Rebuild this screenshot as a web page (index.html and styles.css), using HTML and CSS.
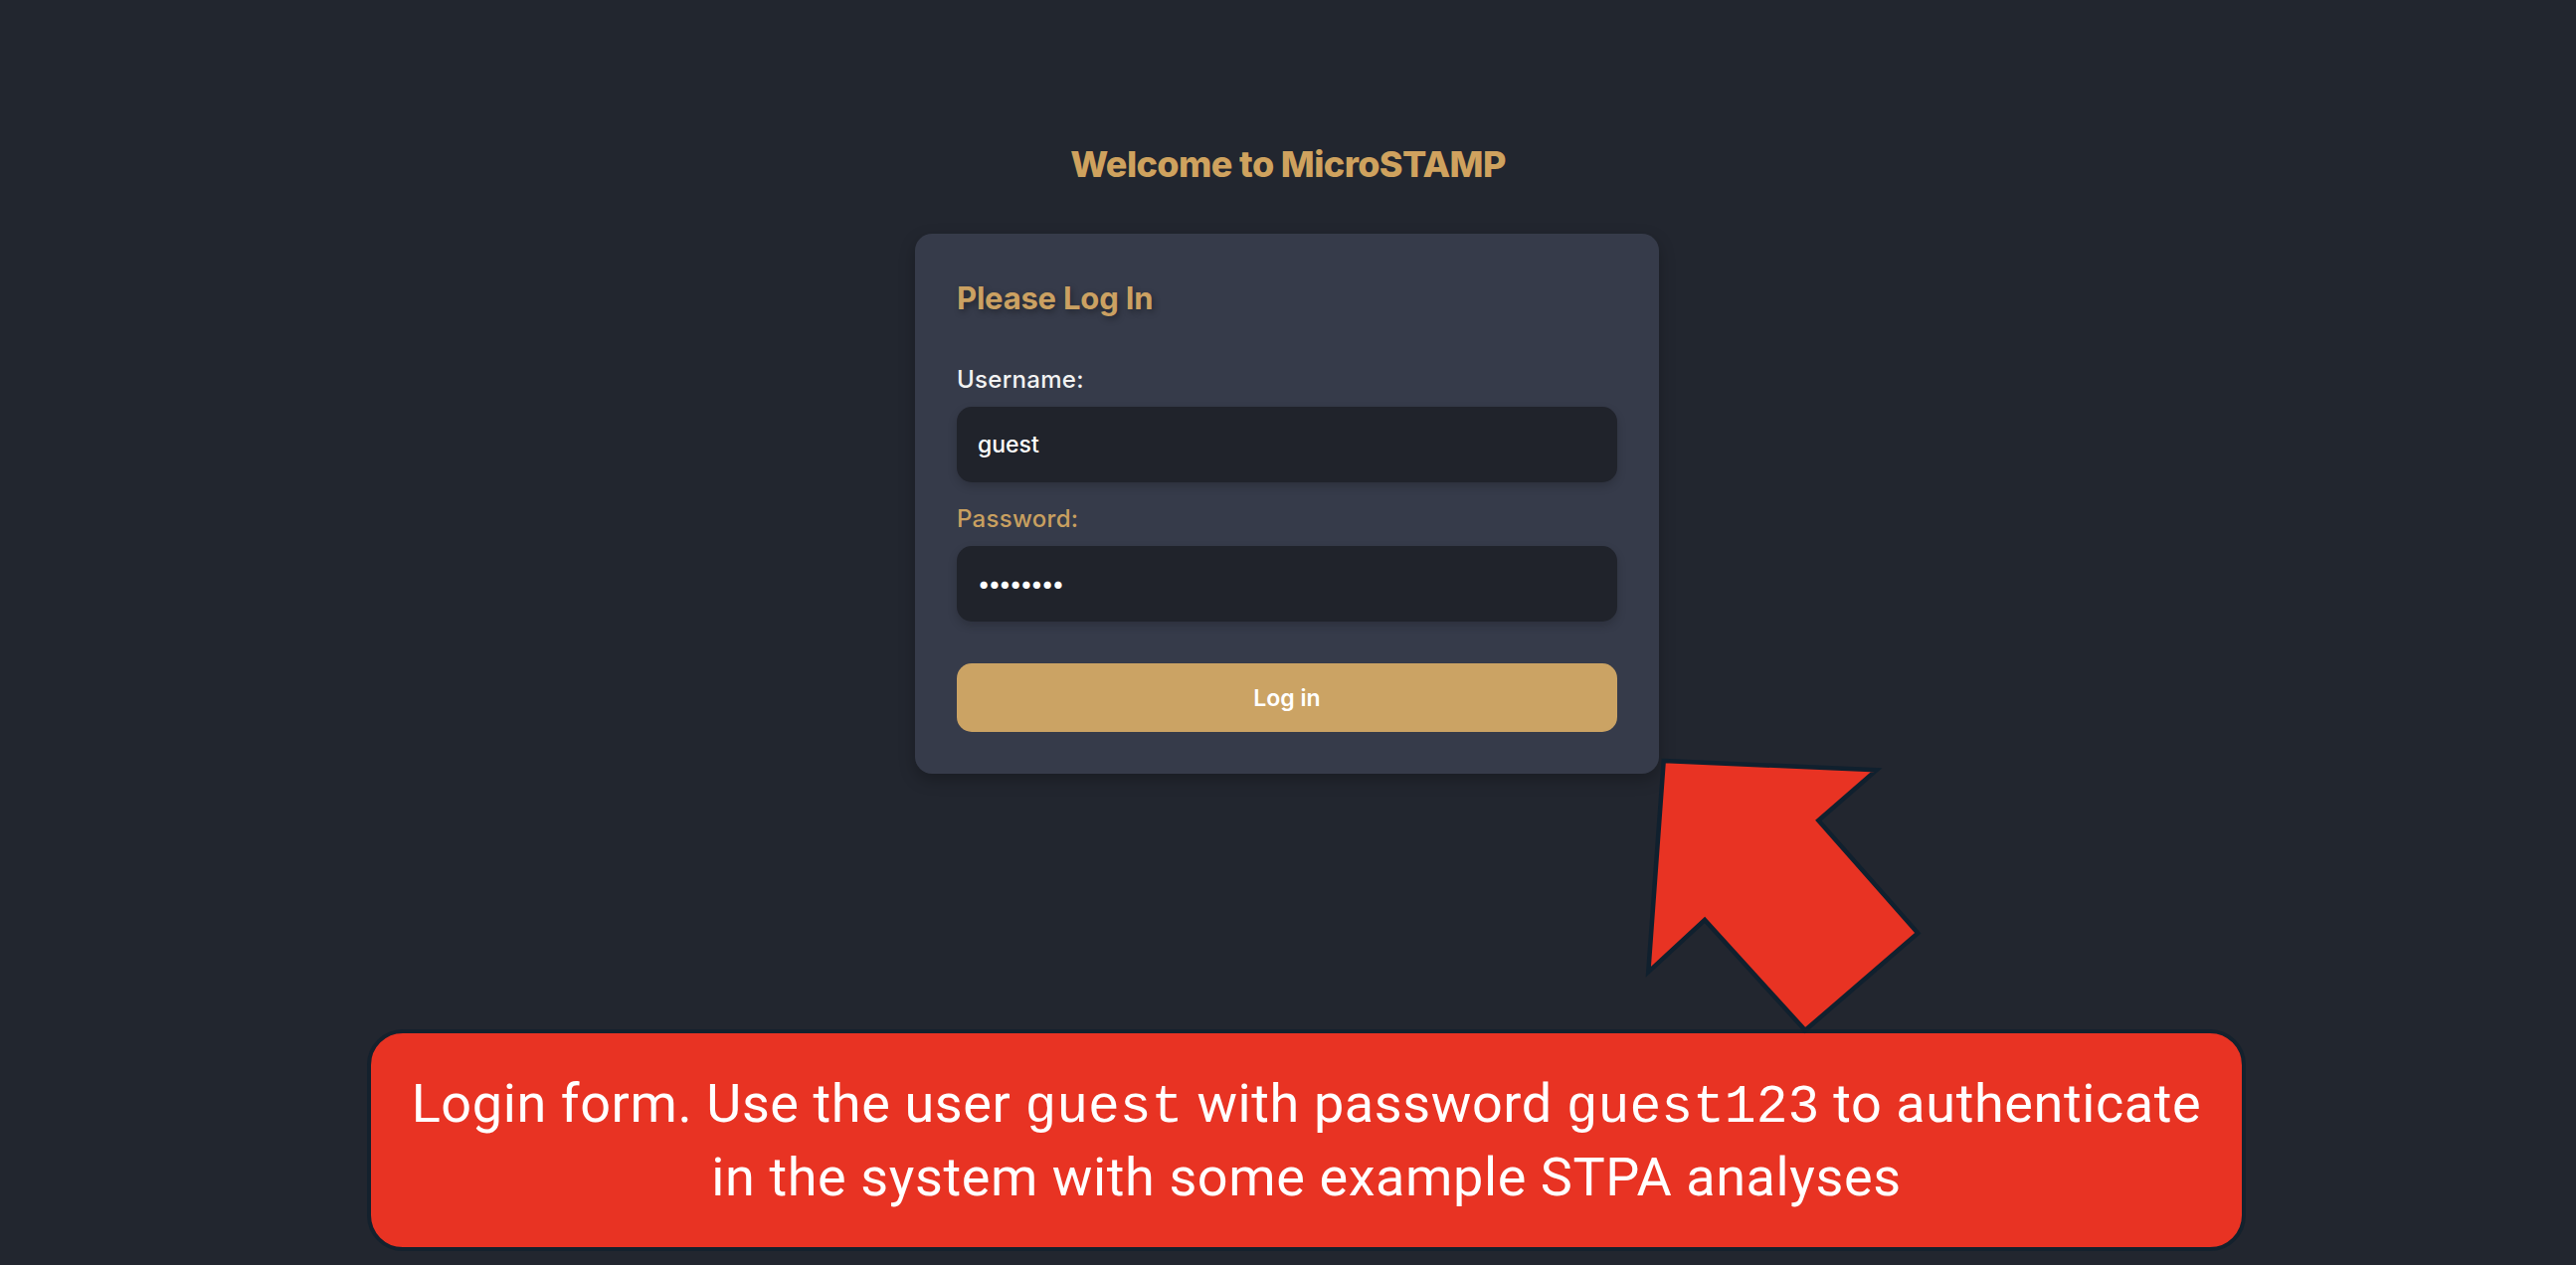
FILE: index.html
```html
<!DOCTYPE html>
<html lang="en">
<head>
<meta charset="utf-8">
<title>MicroSTAMP - Log In</title>
<link rel="stylesheet" href="styles.css">
</head>
<body>
<main class="page">
  <h1 class="welcome">Welcome to MicroSTAMP</h1>
  <form class="card">
    <h2 class="card-title">Please Log In</h2>
    <label class="field-label" for="username">Username:</label>
    <input class="field-input" id="username" type="text" value="guest">
    <label class="field-label field-label-gold" for="password">Password:</label>
    <input class="field-input" id="password" type="password" value="guest123">
    <button class="login-btn" type="button">Log in</button>
  </form>
</main>

<svg class="annot-arrow" width="300" height="300" viewBox="0 0 300 300">
  <polygon points="22.7,10 236.7,19.3 178.3,70 278.3,183.3 165,281 64,170 7.3,222.3" fill="#e83323" stroke="#10202e" stroke-width="4.5" stroke-linejoin="miter"/>
</svg>
<div class="annot-callout">
  <p class="annot-text">Login form. Use the user <code>guest</code> with password <code>guest123</code> to authenticate<br>in the system with some example STPA analyses</p>
</div>
</body>
</html>
```
FILE: styles.css
```css
html, body {
  margin: 0;
  padding: 0;
}
body {
  background: #22262f;
  width: 2590px;
  height: 1272px;
  overflow: hidden;
  position: relative;
  font-family: "Inter", "Open Sans", sans-serif;
}
.page {
  display: flex;
  flex-direction: column;
  align-items: center;
  padding-top: 144px;
}
.welcome {
  margin: 0 0 48px 0;
  font-size: 36px;
  line-height: 43px;
  font-weight: 800;
  color: #cfa25e;
  letter-spacing: -0.6px;
}
.card {
  box-sizing: border-box;
  width: 748px;
  padding: 42px;
  background: #363b4a;
  border-radius: 17px;
  box-shadow: 0 6px 16px rgba(0, 0, 0, 0.25);
  display: flex;
  flex-direction: column;
  margin-left: -2px;
}
.card-title {
  margin: 0 0 43px 0;
  font-size: 31px;
  line-height: 46px;
  font-weight: 700;
  color: #cba162;
  text-shadow: 2px 3px 6px rgba(0, 0, 0, 0.35);
  letter-spacing: -0.2px;
}
.field-label {
  font-size: 24px;
  line-height: 32px;
  font-weight: 500;
  color: #f2f2f2;
  margin-bottom: 11px;
  letter-spacing: 0.3px;
}
.field-label-gold {
  color: #c9a060;
  margin-top: 21px;
}
.field-input {
  box-sizing: border-box;
  height: 76px;
  width: 100%;
  border: none;
  outline: none;
  border-radius: 15px;
  background: #20232b;
  color: #ffffff;
  padding: 0 21px;
  font-family: "Inter", "Open Sans", sans-serif;
  font-size: 23px;
  font-weight: 500;
  box-shadow: 0 4px 10px rgba(0, 0, 0, 0.18);
}
#password {
  letter-spacing: -1.6px;
}
.login-btn {
  margin-top: 42px;
  height: 69px;
  width: 100%;
  border: none;
  border-radius: 15px;
  background: #cba364;
  color: #ffffff;
  font-family: "Inter", "Open Sans", sans-serif;
  font-size: 23px;
  font-weight: 600;
  cursor: pointer;
}
.annot-arrow {
  position: absolute;
  left: 1650px;
  top: 755px;
  z-index: 2;
}
.annot-callout {
  position: absolute;
  left: 369px;
  top: 1035px;
  width: 1889px;
  height: 223px;
  box-sizing: border-box;
  background: #e83323;
  border: 4px solid #14212d;
  border-radius: 36px;
  display: flex;
  align-items: center;
  justify-content: center;
  z-index: 1;
}
.annot-text {
  margin: 0;
  text-align: center;
  color: #ffffff;
  font-family: "Roboto", sans-serif;
  font-size: 54px;
  line-height: 70px;
  letter-spacing: 0.6px;
}
.annot-text code {
  font-family: "Liberation Mono", monospace;
  font-size: 53px;
  letter-spacing: 0;
  font-weight: 400;
}
```
